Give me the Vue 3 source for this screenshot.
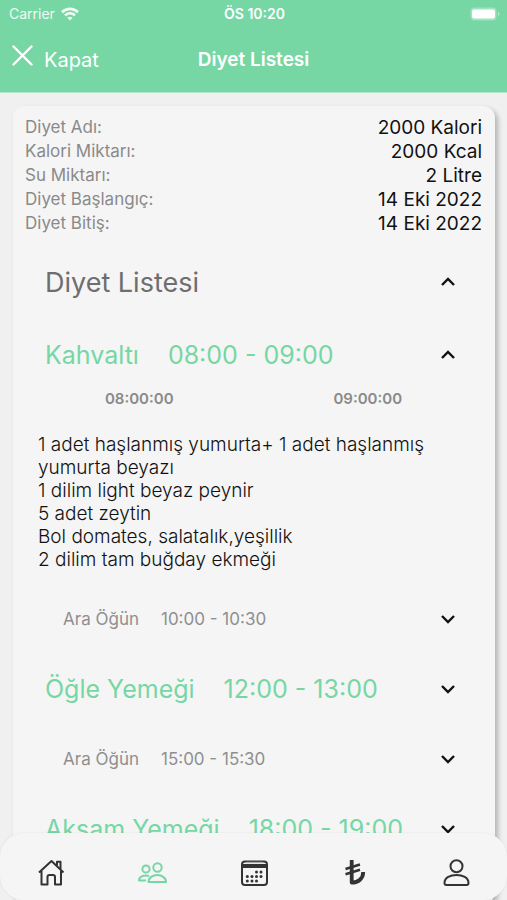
<script setup>
import { ref, reactive } from 'vue';

const info = [
    { label: 'Diyet Adı:', value: '2000 Kalori' },
    { label: 'Kalori Miktarı:', value: '2000 Kcal' },
    { label: 'Su Miktarı:', value: '2 Litre' },
    { label: 'Diyet Başlangıç:', value: '14 Eki 2022' },
    { label: 'Diyet Bitiş:', value: '14 Eki 2022' },
];

const listOpen = ref(true);

const meals = reactive([
    {
        name: 'Kahvaltı',
        start: '08:00',
        end: '09:00',
        main: true,
        open: true,
        items: [
            '1 adet haşlanmış yumurta+ 1 adet haşlanmış yumurta beyazı',
            '1 dilim light beyaz peynir',
            '5 adet zeytin',
            'Bol domates, salatalık,yeşillik',
            '2 dilim tam buğday ekmeği',
        ],
    },
    { name: 'Ara Öğün', start: '10:00', end: '10:30', main: false, open: false, items: [] },
    { name: 'Öğle Yemeği', start: '12:00', end: '13:00', main: true, open: false, items: [] },
    { name: 'Ara Öğün', start: '15:00', end: '15:30', main: false, open: false, items: [] },
    { name: 'Akşam Yemeği', start: '18:00', end: '19:00', main: true, open: false, items: [] },
]);

// day marks of the calendar icon
const days = [[16.5, 14], [21, 14], [7.3, 18.5], [12, 18.5], [16.5, 18.5], [21, 18.5], [7.3, 23], [12, 23], [16.5, 23]];
</script>

<template>
    <div class="app">
        <header class="header">
            <div class="status">
                <div class="carrier">
                    <span>Carrier</span>
                    <svg width="18" height="14" viewBox="0 0 18 14" fill="none" stroke="#fff" stroke-width="2.6">
                        <path d="M1 5.2C5.6 0.7 12.4 0.7 17 5.2" />
                        <path d="M4 8.4C7 5.6 11 5.6 14 8.4" />
                        <path d="M6.3 10.7C7.9 9.3 10.1 9.3 11.7 10.7L9 13.6z" fill="#fff" stroke="none" />
                    </svg>
                </div>
                <div class="clock">ÖS 10:20</div>
                <svg class="battery" width="30" height="14" viewBox="0 0 30 14">
                    <rect x="0.5" y="0.5" width="26" height="13" rx="4" fill="#fff" fill-opacity="0.3" />
                    <rect x="2" y="2.5" width="23" height="9" rx="2" fill="#fff" />
                    <path d="M28 5v4c2-.6 2-3.4 0-4z" fill="#fff" fill-opacity="0.4" />
                </svg>
            </div>
            <div class="titlebar">
                <button class="close" type="button">
                    <svg width="22" height="22" viewBox="0 0 22 22" stroke="#fff" stroke-width="2.4" stroke-linecap="round">
                        <path d="M1.5 1.5L19.5 19.5M19.5 1.5L1.5 19.5" />
                    </svg>
                    <span>Kapat</span>
                </button>
                <h1>Diyet Listesi</h1>
            </div>
        </header>

        <main class="content">
            <section class="card">
                <dl class="info">
                    <div v-for="row in info" :key="row.label" class="info-row">
                        <dt>{{ row.label }}</dt>
                        <dd>{{ row.value }}</dd>
                    </div>
                </dl>

                <button class="row list-title" type="button" :aria-expanded="listOpen" @click="listOpen = !listOpen">
                    <span>Diyet Listesi</span>
                    <svg class="chevron" :class="{ up: listOpen }" viewBox="0 0 16 10">
                        <path d="M2 2L8 8L14 2" />
                    </svg>
                </button>

                <div v-if="listOpen">
                    <div v-for="(meal, i) in meals" :key="i">
                        <button
                            class="row"
                            :class="meal.main ? 'meal' : 'snack'"
                            type="button"
                            :aria-expanded="meal.open"
                            @click="meal.open = !meal.open"
                        >
                            <span>{{ meal.name }}</span>
                            <span>{{ meal.start }} - {{ meal.end }}</span>
                            <svg class="chevron" :class="{ up: meal.open }" viewBox="0 0 16 10">
                                <path d="M2 2L8 8L14 2" />
                            </svg>
                        </button>
                        <div v-if="meal.open" class="detail">
                            <div class="hours">
                                <span>{{ meal.start }}:00</span>
                                <span>{{ meal.end }}:00</span>
                            </div>
                            <p v-for="item in meal.items" :key="item">{{ item }}</p>
                        </div>
                    </div>
                </div>
            </section>
        </main>

        <nav class="tabs">
            <a href="#" aria-label="Ana sayfa">
                <svg width="28" height="28" viewBox="0 0 28 28">
                    <path d="M2 14.5L14.5 3L26.5 14.5M4.5 13V26.5H10.5V19Q10.5 17 12.5 17H16Q18 17 18 19V26.5H24V13" />
                    <path d="M20 7.5V3.8H23.5V11" />
                </svg>
            </a>
            <a href="#" class="active" aria-label="Diyetisyen">
                <svg width="30" height="28" viewBox="0 0 30 28">
                    <circle cx="20.5" cy="9.5" r="4.2" />
                    <path d="M11.5 24C11.5 14.8 29 14.8 29 24z" />
                    <circle cx="9" cy="11" r="3.6" />
                    <path d="M9 22.5H2C2 18.2 7 16.6 12 18" />
                </svg>
            </a>
            <a href="#" aria-label="Takvim">
                <svg width="28" height="28" viewBox="0 0 28 28">
                    <rect x="2" y="3.5" width="25" height="23.5" rx="3" />
                    <path d="M2.5 8H26.5" stroke-width="4" />
                    <path d="M6 4.5H23" stroke="#aaa" stroke-width="1.4" />
                    <circle
                        v-for="([x, y], i) in days"
                        :key="i"
                        :cx="x"
                        :cy="y"
                        r="1.5"
                        fill="currentColor"
                        stroke="none"
                    />
                </svg>
            </a>
            <a href="#" aria-label="Ödemeler">
                <svg width="24" height="28" viewBox="0 0 24 28">
                    <path d="M8.7 2V24.6C15.5 24.6 20.2 20.5 20.2 14" stroke-width="3.8" />
                    <path d="M2.5 11L17 6.5M2.5 16.2L17 11.7" stroke-width="2.6" />
                </svg>
            </a>
            <a href="#" aria-label="Profil">
                <svg width="28" height="28" viewBox="0 0 28 28">
                    <circle cx="14.5" cy="8.2" r="6" />
                    <path d="M2.5 25C2.5 14.3 26.5 14.3 26.5 25Q26.5 27 24.5 27H4.5Q2.5 27 2.5 25z" />
                </svg>
            </a>
        </nav>
    </div>
</template>

<style>
body {
    background: #f0f0f0;
}
</style>

<style scoped>
.app {
    height: 100vh;
    display: flex;
    flex-direction: column;
    overflow: hidden;
    font-family: Inter, "Liberation Sans", sans-serif;
    color: #111;
}

button {
    border: 0;
    padding: 0;
    background: none;
    font: inherit;
    color: inherit;
    text-align: left;
    cursor: pointer;
}

.header {
    flex: none;
    background: #76d7a4;
    color: #fff;
    border-bottom: 1px solid #b5e6cc;
}

.status {
    display: grid;
    grid-template-columns: 1fr auto 1fr;
    align-items: center;
    height: 27px;
    padding: 0 7px 0 9px;
    font-size: 14px;
}

.carrier {
    display: flex;
    align-items: center;
    gap: 6px;
    opacity: 0.9;
}

.clock {
    font-weight: 600;
}

.battery {
    justify-self: end;
}

.titlebar {
    display: grid;
    grid-template-columns: 1fr auto 1fr;
    align-items: center;
    height: 65px;
    padding: 0 12px;
}

.close {
    display: flex;
    align-items: center;
    gap: 10px;
    font-size: 20px;
}

.close svg {
    margin-bottom: 8px;
}

h1 {
    margin: 0;
    font-size: 19px;
    font-weight: 600;
}

.content {
    flex: 1;
    min-height: 0;
    overflow: hidden;
    padding: 13px 12px 0 13px;
}

.card {
    padding: 10px 13px 40px 12px;
    border-radius: 12px;
    background: #f5f5f5;
    box-shadow: 3px 3px 5px rgba(0, 0, 0, 0.25);
}

.info {
    margin: 0 0 8px;
}

.info-row {
    display: flex;
    justify-content: space-between;
    line-height: 24px;
    font-size: 19px;
}

.info-row dt {
    font-size: 17px;
    line-height: 22px;
    color: #8a8a8a;
}

.info-row dd {
    margin: 0;
}

.row {
    display: flex;
    align-items: center;
    width: 100%;
    height: 70px;
    padding: 0 26px 0 20px;
    white-space: nowrap;
}

.list-title {
    height: 76px;
    font-size: 27px;
    color: #6e6e6e;
}

.meal {
    gap: 29px;
    font-size: 25px;
    color: #76d7a4;
}

.snack {
    gap: 22px;
    padding-left: 38px;
    font-size: 17px;
    color: #8f8f8f;
}

.chevron {
    width: 16px;
    height: 10px;
    margin-left: auto;
    fill: none;
    stroke: #111;
    stroke-width: 2.4;
}

.chevron.up {
    transform: rotate(180deg);
}

.detail {
    padding: 0 32px 13px 13px;
}

.hours {
    display: flex;
    justify-content: space-around;
    margin: 0 -32px 25px -13px;
    line-height: 18px;
    font-size: 15px;
    font-weight: 600;
    color: #8a8a8a;
}

.detail p {
    margin: 0;
    font-size: 19px;
    font-weight: 300;
    line-height: 23px;
}

.tabs {
    position: fixed;
    right: 0;
    bottom: 0;
    left: 0;
    display: flex;
    height: 67px;
    border-radius: 24px;
    background: #f5f5f5;
    box-shadow: 0 0 2px rgba(0, 0, 0, 0.1);
}

.tabs a {
    flex: 1;
    display: flex;
    align-items: center;
    justify-content: center;
    padding-top: 10px;
    color: #333;
}

.tabs .active {
    color: #76d7a4;
}

.tabs svg {
    fill: none;
    stroke: currentColor;
    stroke-width: 2;
    stroke-linejoin: round;
}
</style>
